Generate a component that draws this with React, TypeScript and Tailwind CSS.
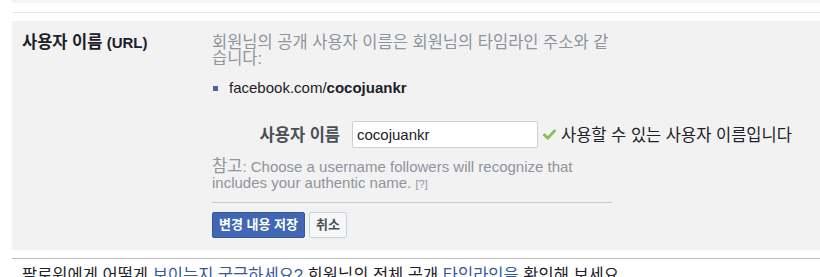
import React from "react";

function CheckIcon() {
  return (
    <svg width="13" height="11" viewBox="0 0 13 11" className="shrink-0">
      <path
        d="M1.5 6 L4.8 9.2 L11.5 1.8"
        fill="none"
        stroke="#6bb33c"
        strokeWidth="2.6"
        strokeLinecap="round"
        strokeLinejoin="round"
      />
      <path
        d="M1.5 6 L4.8 9.2 L11.5 1.8"
        fill="none"
        stroke="#a9dc7d"
        strokeWidth="1"
        strokeLinecap="round"
        strokeLinejoin="round"
      />
    </svg>
  );
}

// hangul runs get a slightly larger size so their widths match the original face
function K({ children }: { children: React.ReactNode }) {
  return <span className="text-[16.5px]">{children}</span>;
}

export default function App() {
  return (
    <div className="h-[277px] w-[820px] overflow-hidden bg-white font-['Liberation_Sans','Noto_Sans_CJK_KR',sans-serif] text-[15px] leading-[16px] text-[#1d2129]">
      <div className="ml-[12px]">
        <div className="h-[3px] bg-[#f5f6f7]" />
        <div className="mt-[9px] h-px bg-[#e6e6e6]" />

        <div className="mt-[8px] flex bg-[#f2f2f2] pb-[12px] pt-[13px]">
          <div className="w-[200px] shrink-0 pl-[10px] font-bold text-[#1d2129]">
            <K>사용자 이름</K> (URL)
          </div>

          <div className="w-[400px] shrink-0">
            <p className="text-[16.5px] text-[#90949c]">
              회원님의 공개 사용자 이름은 회원님의 타임라인 주소와 같습니다:
            </p>

            <div className="mt-[14px] flex items-center">
              <span className="ml-[1px] h-[5px] w-[5px] shrink-0 bg-[#4b67a1]" />
              <span className="ml-[11px] text-[#1d2129]">
                facebook.com/<b>cocojuankr</b>
              </span>
            </div>

            <div className="mt-[25px] flex items-center">
              <label className="w-[128px] shrink-0 text-right text-[16.5px] font-bold text-[#4b4f56]">
                사용자 이름
              </label>
              <div className="ml-[12px] flex h-[27px] w-[186px] shrink-0 items-center rounded-[2px] border border-[#ccd0d8] bg-white pl-[4px] text-[#1d2129]">
                cocojuankr
              </div>
              <span className="ml-[5px] shrink-0">
                <CheckIcon />
              </span>
              <span className="ml-[5px] shrink-0 whitespace-nowrap text-[16.5px] text-[#1d2129]">
                사용할 수 있는 사용자 이름입니다
              </span>
            </div>

            <p className="mt-[10px] text-[#90949c]">
              <K>참고</K>: Choose a username followers will recognize that
              includes your authentic name.{" "}
              <span className="text-[11px]">[?]</span>
            </p>

            <div className="mt-[10px] h-px bg-[#cacaca]" />

            <div className="mt-[9px] flex gap-[4px]">
              <button className="h-[26px] rounded-[2px] border border-[#365899] bg-[#4267b2] px-[6px] text-[13px] font-bold text-white">
                변경 내용 저장
              </button>
              <button className="h-[26px] rounded-[2px] border border-[#ced0d4] bg-[#f6f7f9] px-[6px] text-[13px] font-bold text-[#4b4f56]">
                취소
              </button>
            </div>
          </div>
        </div>

        <div className="mt-[8px] h-px bg-[#bcbcbc]" />

        <p className="whitespace-nowrap pl-[10px] pt-[8px] text-[16.5px]">
          팔로워에게 어떻게{" "}
          <span className="text-[#365899]">보이는지 궁금하세요?</span> 회원님의
          전체 공개 <span className="text-[#365899]">타임라인을</span> 확인해
          보세요.
        </p>
      </div>
    </div>
  );
}
